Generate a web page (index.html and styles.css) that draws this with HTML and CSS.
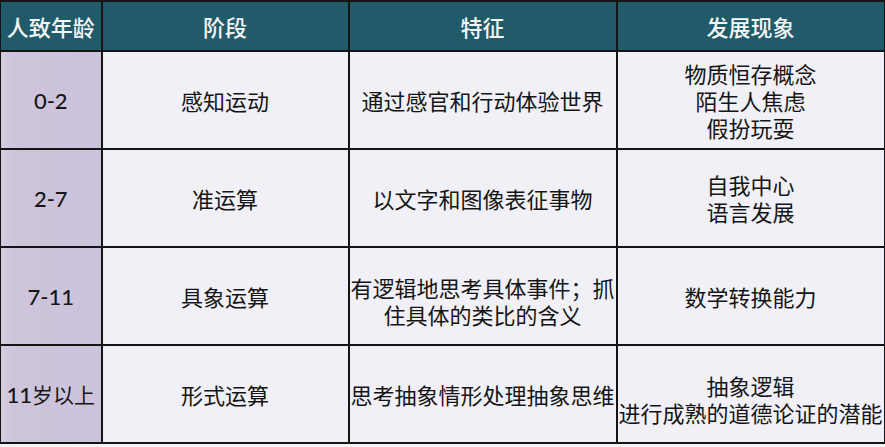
FILE: index.html
```html
<!DOCTYPE html>
<html lang="zh-CN">
<head>
<meta charset="utf-8">
<title>皮亚杰认知发展阶段</title>
<link rel="stylesheet" href="styles.css">
</head>
<body>
<table class="stages">
  <colgroup>
    <col class="c-age">
    <col class="c-stage">
    <col class="c-feature">
    <col class="c-phen">
  </colgroup>
  <thead>
    <tr class="head-row">
      <th>人致年龄</th>
      <th>阶段</th>
      <th>特征</th>
      <th>发展现象</th>
    </tr>
  </thead>
  <tbody>
    <tr class="row">
      <td class="age">0-2</td>
      <td>感知运动</td>
      <td>通过感官和行动体验世界</td>
      <td><div class="ln">物质恒存概念</div><div class="ln">陌生人焦虑</div><div class="ln">假扮玩耍</div></td>
    </tr>
    <tr class="row">
      <td class="age">2-7</td>
      <td>准运算</td>
      <td>以文字和图像表征事物</td>
      <td><div class="ln">自我中心</div><div class="ln">语言发展</div></td>
    </tr>
    <tr class="row">
      <td class="age">7-11</td>
      <td>具象运算</td>
      <td class="down"><div class="ln">有逻辑地思考具体事件；抓</div><div class="ln">住具体的类比的含义</div></td>
      <td>数学转换能力</td>
    </tr>
    <tr class="row">
      <td class="age">11<span class="cjk">岁以上</span></td>
      <td>形式运算</td>
      <td>思考抽象情形处理抽象思维</td>
      <td class="down"><div class="ln">抽象逻辑</div><div class="ln">进行成熟的道德论证的潜能</div></td>
    </tr>
  </tbody>
</table>
</body>
</html>
```

FILE: styles.css
```css
html, body {
  margin: 0;
  padding: 0;
  background: #f4f4f6;
}

.stages {
  border-collapse: collapse;
  table-layout: fixed;
  width: 884px;
  font-family: "Noto Sans CJK SC", "Noto Sans", sans-serif;
  font-size: 22px;
  line-height: 27px;
  color: #151515;
}

.c-age { width: 101px; }
.c-stage { width: 247px; }
.c-feature { width: 268px; }
.c-phen { width: 268px; }

.stages th,
.stages td {
  border: 2px solid #141414;
  padding: 0;
  text-align: center;
  vertical-align: middle;
  white-space: nowrap;
  overflow: visible;
}

.stages th:first-child,
.stages td:first-child {
  border-left-width: 1px;
}

.head-row {
  height: 50px;
}

.stages th {
  background: #215a69;
  color: #f4f6f6;
  font-weight: 500;
  font-size: 22px;
}

.row {
  height: 98px;
}

.stages td {
  background: #f0f0f6;
}

.ln {
  height: 27px;
  line-height: 27px;
}

.stages td.age {
  background: linear-gradient(to right, #d6cce0 0px, #cec4dc 10px, #cbc3db 100%);
  font-family: "Lato", "Open Sans", sans-serif;
  font-size: 22px;
  font-weight: 500;
  color: #161616;
}

.stages td.age .cjk {
  font-family: "Noto Sans CJK SC", sans-serif;
  font-weight: 400;
  font-size: 21px;
}

.stages td.down {
  padding-top: 10px;
}
```
